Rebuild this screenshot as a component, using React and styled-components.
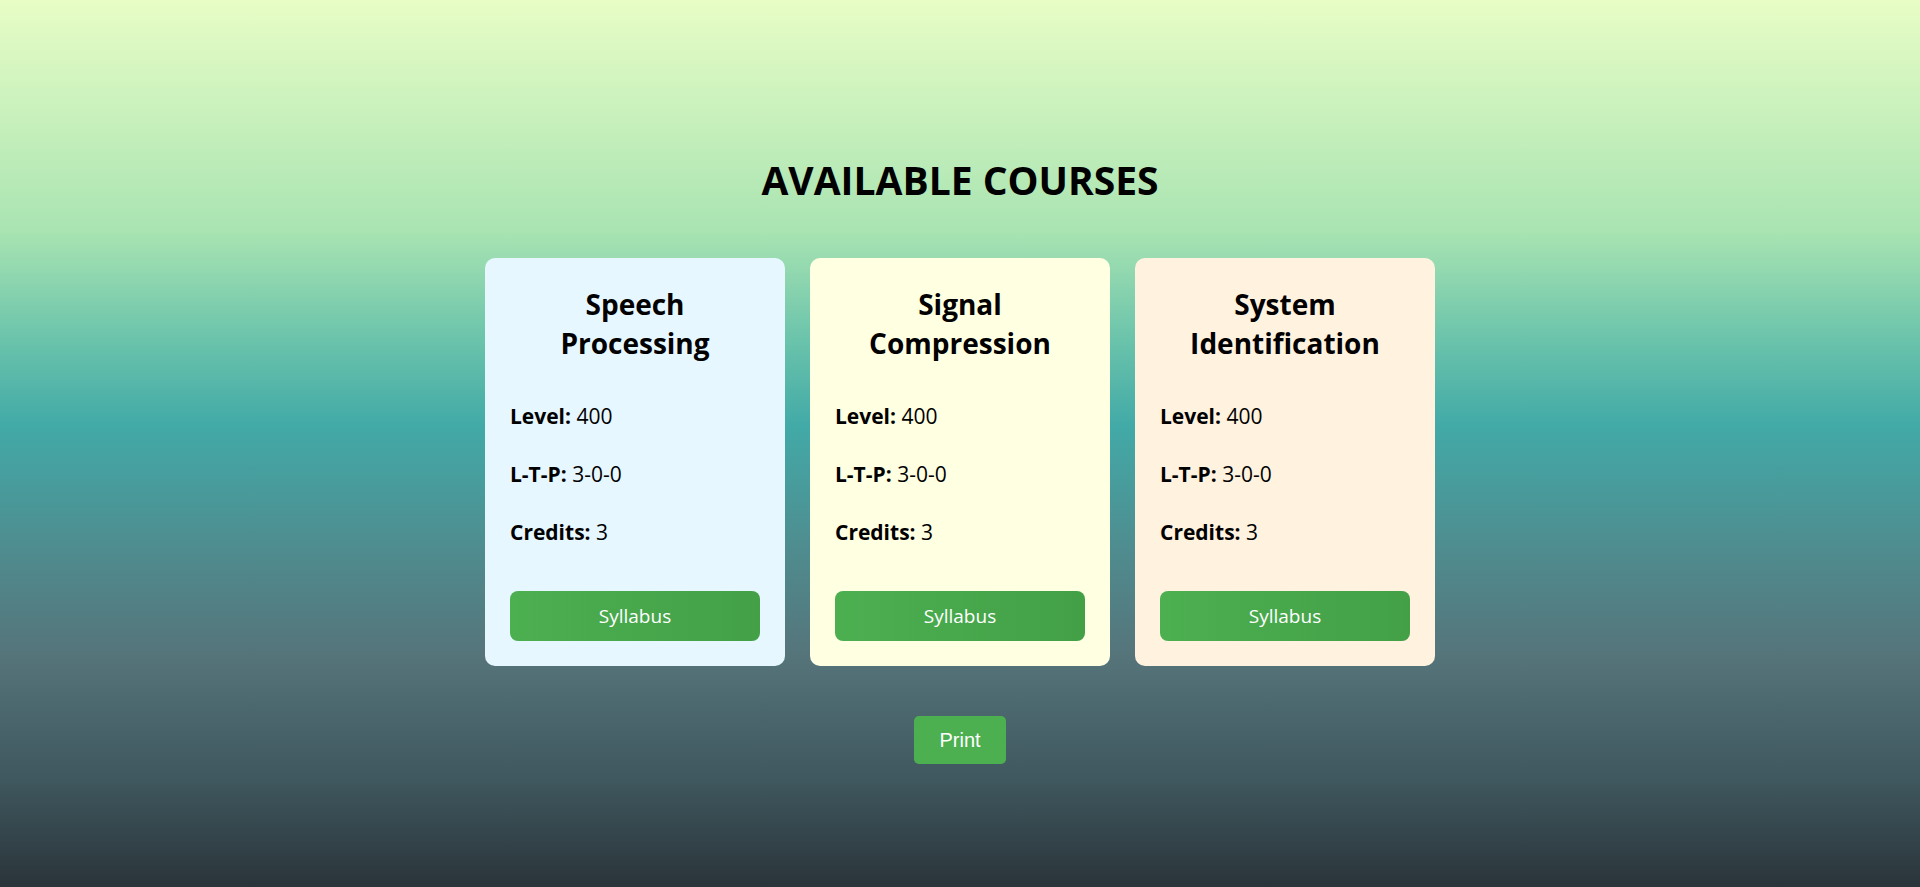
import React from 'react'
import styled, { createGlobalStyle } from 'styled-components'

const GlobalStyle = createGlobalStyle`
  html, body {
    margin: 0;
    padding: 0;
  }
  body {
    min-height: 100vh;
    font-family: "Segoe UI", "Open Sans", sans-serif;
    background: linear-gradient(
      to bottom,
      #e8fdc6 0%,
      #a9e4b2 26%,
      #6cc4ab 38%,
      #42aaa7 48%,
      #4f8c8f 62%,
      #55747a 74%,
      #3f575e 88%,
      #2a343a 100%
    );
    background-attachment: fixed;
  }
`

const courses = [
  { name: 'Speech Processing', level: 400, ltp: '3-0-0', credits: 3, bg: '#e6f7ff' },
  { name: 'Signal Compression', level: 400, ltp: '3-0-0', credits: 3, bg: '#ffffe1' },
  { name: 'System Identification', level: 400, ltp: '3-0-0', credits: 3, bg: '#fff2df' },
]

function App() {
  return (
    <>
      <GlobalStyle />
      <Page>
        <Title>AVAILABLE COURSES</Title>
        <CardRow>
          {courses.map((c) => (
            <Card key={c.name} $bg={c.bg}>
              <CourseName>{c.name}</CourseName>
              <Info>
                <Line><b>Level:</b> {c.level}</Line>
                <Line><b>L-T-P:</b> {c.ltp}</Line>
                <Line><b>Credits:</b> {c.credits}</Line>
              </Info>
              <SyllabusButton>Syllabus</SyllabusButton>
            </Card>
          ))}
        </CardRow>
        <PrintButton onClick={() => window.print()}>Print</PrintButton>
      </Page>
    </>
  )
}

const Page = styled.div`
  display: flex;
  flex-direction: column;
  align-items: center;
  padding-top: 154px;
`

const Title = styled.h1`
  margin: 0 0 52px;
  font-size: 39px;
  font-weight: 700;
  line-height: 52px;
  color: #000;
`

const CardRow = styled.div`
  display: flex;
  flex-direction: row;
  gap: 25px;
`

const Card = styled.div`
  box-sizing: border-box;
  width: 300px;
  padding: 25px;
  display: flex;
  flex-direction: column;
  border-radius: 10px;
  background-color: ${(p) => p.$bg};
`

const CourseName = styled.h2`
  margin: 2px 0 40px;
  font-size: 28px;
  font-weight: 700;
  line-height: 38.5px;
  text-align: center;
  color: #000;
`

const Info = styled.div`
  display: flex;
  flex-direction: column;
  gap: 30px;
`

const Line = styled.p`
  margin: 0;
  font-size: 21px;
  line-height: 28px;
  color: #000;
  b {
    font-weight: 700;
  }
`

const SyllabusButton = styled.button`
  margin-top: 45px;
  height: 50px;
  width: 100%;
  border: none;
  border-radius: 8px;
  font-family: "Segoe UI", "Open Sans", sans-serif;
  font-size: 19px;
  color: #fff;
  background: linear-gradient(to right, #4caf50, #43a047);
  cursor: pointer;
`

const PrintButton = styled.button`
  margin-top: 50px;
  width: 92px;
  height: 48px;
  border: none;
  border-radius: 5px;
  font-family: "Liberation Sans", Arial, sans-serif;
  font-size: 20px;
  color: #fff;
  background-color: #4caf50;
  cursor: pointer;
`

export default App
